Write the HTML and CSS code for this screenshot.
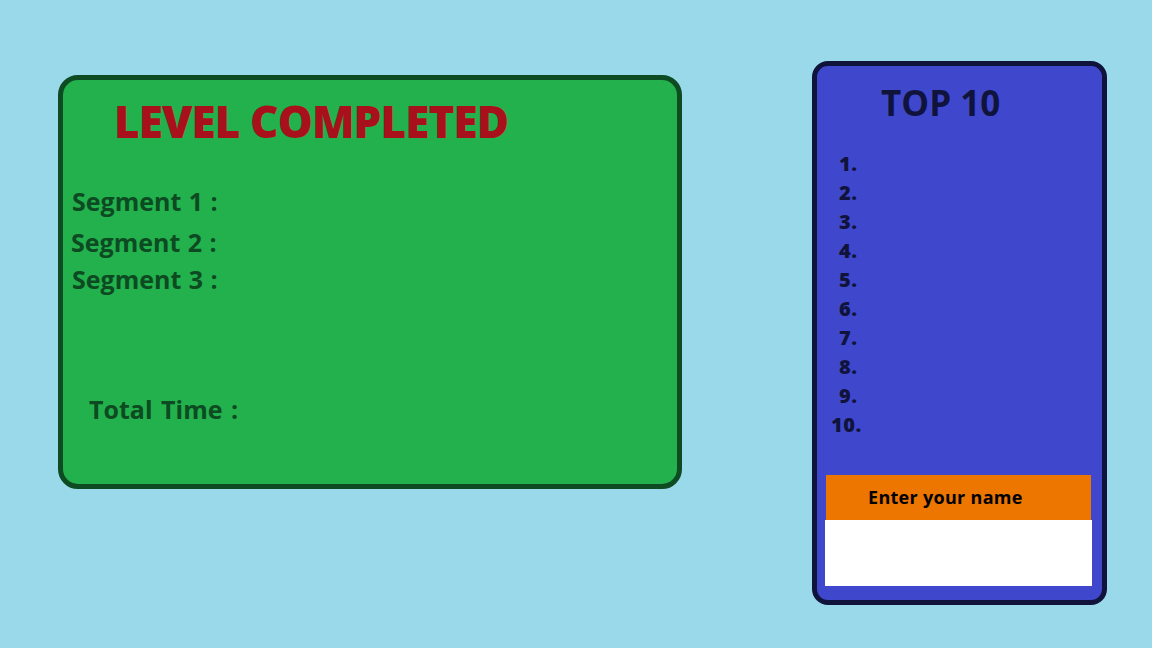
FILE: index.html
```html
<!DOCTYPE html>
<html>
<head>
<meta charset="utf-8">
<link rel="stylesheet" href="styles.css">
</head>
<body>
<div class="stage">
  <section class="result-card">
    <h1 class="result-title">LEVEL COMPLETED</h1>
    <div class="segments">
      <p class="seg seg-1">Segment 1 :</p>
      <p class="seg seg-2">Segment 2 :</p>
      <p class="seg seg-3">Segment 3 :</p>
    </div>
    <p class="total">Total Time :</p>
  </section>
  <aside class="board">
    <h2 class="board-title">TOP 10</h2>
    <ol class="ranks">
      <li class="rank">1.</li>
      <li class="rank">2.</li>
      <li class="rank">3.</li>
      <li class="rank">4.</li>
      <li class="rank">5.</li>
      <li class="rank">6.</li>
      <li class="rank">7.</li>
      <li class="rank">8.</li>
      <li class="rank">9.</li>
      <li class="rank rank-wide">10.</li>
    </ol>
    <div class="name-label">Enter your name</div>
    <div class="name-input"></div>
  </aside>
</div>
</body>
</html>
```
FILE: styles.css
```css
html, body {
  margin: 0;
  padding: 0;
}
body {
  background: #99d9ea;
  width: 1152px;
  height: 648px;
  overflow: hidden;
  font-family: "Open Sans", "Noto Sans", sans-serif;
  font-weight: 700;
}
.stage {
  display: flex;
  align-items: flex-start;
  padding-left: 58px;
}
.result-card {
  box-sizing: border-box;
  margin-top: 75px;
  width: 624px;
  height: 414px;
  background: #22b14c;
  border: 5px solid #0e4a22;
  border-radius: 20px;
  display: flex;
  flex-direction: column;
}
.result-title {
  margin: 19px 0 0 51px;
  font-size: 44px;
  line-height: 44px;
  font-weight: 800;
  color: #a8111b;
  letter-spacing: -0.9px;
}
.segments {
  margin-top: 43px;
  display: flex;
  flex-direction: column;
}
.seg {
  margin: 0;
  font-size: 25px;
  line-height: 30px;
  color: #0d4a22;
  letter-spacing: 0;
  word-spacing: 1px;
}
.seg-1 { padding-left: 9px; }
.seg-2 { padding-left: 8px; margin-top: 11px; }
.seg-3 { padding-left: 9px; margin-top: 7px; }
.total {
  margin: 100px 0 0 26px;
  font-size: 25px;
  line-height: 30px;
  color: #0d4a22;
  letter-spacing: 0;
  word-spacing: 2px;
}
.board {
  box-sizing: border-box;
  margin-top: 61px;
  margin-left: 130px;
  width: 295px;
  height: 544px;
  background: #3f48cc;
  border: 5px solid #10143c;
  border-radius: 16px;
  display: flex;
  flex-direction: column;
}
.board-title {
  margin: 17px 0 0 64px;
  font-size: 35px;
  line-height: 40px;
  color: #10143c;
  letter-spacing: 0;
}
.ranks {
  list-style: none;
  margin: 26px 0 0 0;
  padding: 0;
}
.rank {
  height: 29px;
  line-height: 29px;
  padding-left: 22px;
  font-size: 20px;
  font-weight: 800;
  color: #10143c;
  letter-spacing: 0.5px;
}
.rank-wide { padding-left: 14px; }
.name-label {
  margin: 36px 0 0 9px;
  width: 265px;
  height: 45px;
  box-sizing: border-box;
  background: #ed7600;
  color: #000;
  font-size: 18px;
  line-height: 44px;
  padding-left: 42px;
  letter-spacing: 0.3px;
}
.name-input {
  margin-left: 8px;
  width: 267px;
  height: 66px;
  background: #fff;
}
```
